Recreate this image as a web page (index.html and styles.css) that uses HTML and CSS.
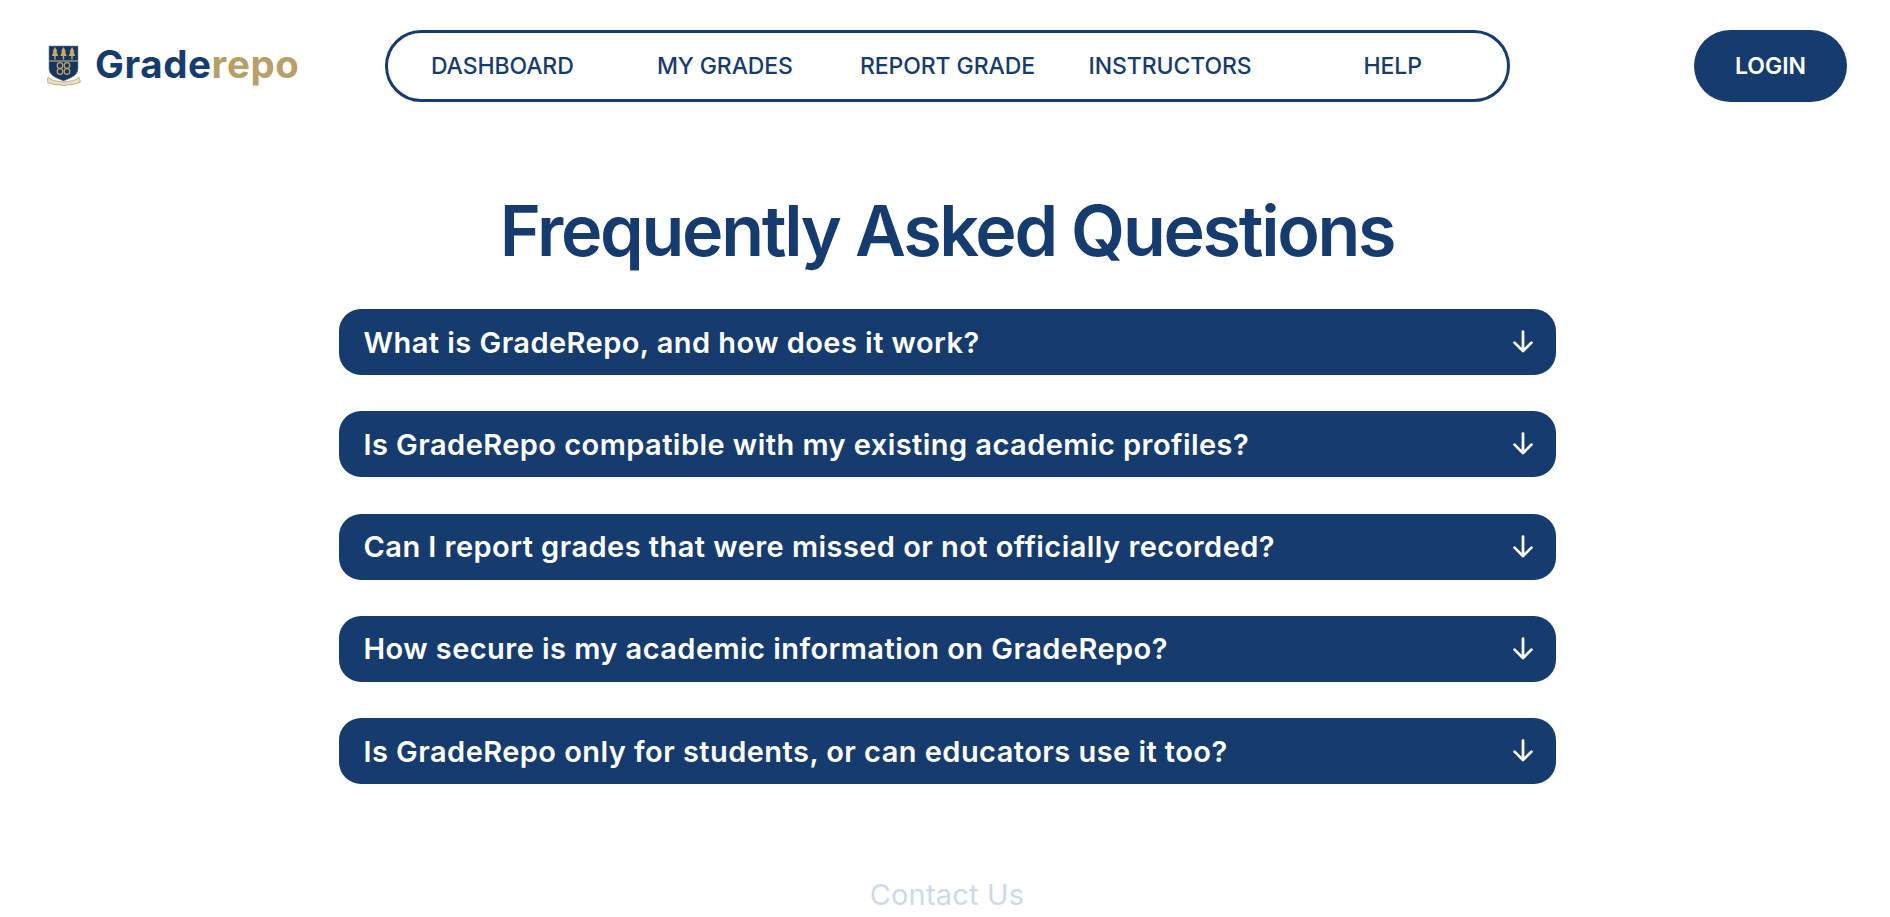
FILE: index.html
```html
<!DOCTYPE html>
<html lang="en">
<head>
  <meta charset="UTF-8">
  <meta name="viewport" content="width=device-width, initial-scale=1.0">
  <title>GradeRepo FAQ</title>
  <link rel="stylesheet" href="styles.css">
</head>
<body>

  <!-- Header with logo and navigation -->
  <header class="header">
    <a href="#" class="logo-container">
      <svg class="logo" viewBox="0 0 34 42" aria-hidden="true">
        <path d="M2 1H31V24C31 30 24 33 16.500 36C9 33 2 30 2 24Z" fill="#17365f" stroke="#6f83a0" stroke-width="0.600"/>
        <rect x="2.300" y="15.500" width="28.400" height="1" fill="#d6c08a"/>
        <g fill="#c9ab69">
          <path d="M8 2L10.500 6.500L9.400 6.500L11.200 11L8.700 11V14.500H7.300V11L4.800 11L6.600 6.500L5.500 6.500Z"/>
          <path d="M16.500 2L19 6.500L17.900 6.500L19.700 11L17.200 11V14.500H15.800V11L13.300 11L15.100 6.500L14 6.500Z"/>
          <path d="M25 2L27.500 6.500L26.400 6.500L28.200 11L25.700 11V14.500H24.300V11L21.800 11L23.600 6.500L22.500 6.500Z"/>
        </g>
        <g fill="none" stroke="#c2a565" stroke-width="1.200">
          <circle cx="13" cy="20.500" r="2.800"/>
          <circle cx="20" cy="20.500" r="2.800"/>
          <circle cx="13" cy="26.500" r="2.800"/>
          <circle cx="20" cy="26.500" r="2.800"/>
        </g>
        <path d="M1 32.500C6 36.500 11 36 16.500 37C22 36 27 36.500 32 32.500L33.500 37C28 40 22 39.500 16.500 40.500C11 39.500 5 40 -0.500 37Z" fill="#e9dcc0" stroke="#b89f68" stroke-width="0.800"/>
      </svg>
      <div class="logo-text">Grade<span class="logo-accent">repo</span></div>
    </a>
    <nav class="nav-links">
      <a href="#" class="nav-link">DASHBOARD</a>
      <a href="#" class="nav-link">MY GRADES</a>
      <a href="#" class="nav-link">REPORT GRADE</a>
      <a href="#" class="nav-link">INSTRUCTORS</a>
      <a href="#" class="nav-link">HELP</a>
    </nav>
    <a href="#" class="login-btn">LOGIN</a>
  </header>

  <!-- Main content -->
  <main class="main-content">
    <h1 class="title">Frequently Asked Questions</h1>
    <div class="faq-list">
      <button class="faq-item">
        <span>What is GradeRepo, and how does it work?</span>
        <svg class="faq-arrow" viewBox="0 0 20 20" aria-hidden="true"><path d="M10 2V17M3.500 10.500L10 17L16.500 10.500"/></svg>
      </button>
      <button class="faq-item">
        <span>Is GradeRepo compatible with my existing academic profiles?</span>
        <svg class="faq-arrow" viewBox="0 0 20 20" aria-hidden="true"><path d="M10 2V17M3.500 10.500L10 17L16.500 10.500"/></svg>
      </button>
      <button class="faq-item">
        <span>Can I report grades that were missed or not officially recorded?</span>
        <svg class="faq-arrow" viewBox="0 0 20 20" aria-hidden="true"><path d="M10 2V17M3.500 10.500L10 17L16.500 10.500"/></svg>
      </button>
      <button class="faq-item">
        <span>How secure is my academic information on GradeRepo?</span>
        <svg class="faq-arrow" viewBox="0 0 20 20" aria-hidden="true"><path d="M10 2V17M3.500 10.500L10 17L16.500 10.500"/></svg>
      </button>
      <button class="faq-item">
        <span>Is GradeRepo only for students, or can educators use it too?</span>
        <svg class="faq-arrow" viewBox="0 0 20 20" aria-hidden="true"><path d="M10 2V17M3.500 10.500L10 17L16.500 10.500"/></svg>
      </button>
    </div>
    <div class="contact-link">Contact Us</div>
  </main>
</body>
</html>
```

FILE: styles.css
```css
/* Colors */
:root {
  --navy: #163c6f;
  --gold: #b89f68;
}

/* Base styles */
* {
  margin: 0;
  padding: 0;
  box-sizing: border-box;
}

body {
  font-family: Inter, 'Noto Sans', sans-serif;
  background-color: #ffffff;
  color: var(--navy);
  overflow: hidden;
  height: 100vh;
}

/* Header */
.header {
  display: flex;
  align-items: center;
  padding: 30px 43px 0 47px;
}

.logo-container {
  display: flex;
  align-items: center;
  gap: 14px;
  width: 338px;
  text-decoration: none;
}

.logo {
  width: 34px;
  height: 42px;
  flex-shrink: 0;
}

.logo-text {
  padding-bottom: 5px;
  font-size: 38.500px;
  font-weight: 700;
  letter-spacing: 0.6px;
  color: var(--navy);
}

.logo-accent {
  color: var(--gold);
}

.nav-links {
  display: grid;
  grid-template-columns: repeat(5, 1fr);
  width: 1125px;
  height: 72px;
  padding: 0 3px;
  align-items: center;
  border: 3px solid var(--navy);
  border-radius: 36px;
}

.nav-link {
  font-size: 23px;
  font-weight: 500;
  letter-spacing: -0.1px;
  text-align: center;
  color: var(--navy);
  text-decoration: none;
}

.login-btn {
  margin-left: auto;
  width: 153px;
  height: 72px;
  display: flex;
  align-items: center;
  justify-content: center;
  background-color: var(--navy);
  border-radius: 36px;
  color: #ffffff;
  font-size: 23px;
  font-weight: 600;
  text-decoration: none;
}

/* Main content */
.main-content {
  display: flex;
  flex-direction: column;
  align-items: center;
  padding-left: 4px;
}

.title {
  margin-top: 92px;
  font-size: 70px;
  font-weight: 600;
  letter-spacing: -2.3px;
  line-height: 73px;
  text-align: center;
}

.faq-list {
  display: flex;
  flex-direction: column;
  gap: 36.250px;
  width: 1217px;
  margin-top: 42px;
}

.faq-item {
  display: flex;
  align-items: center;
  justify-content: space-between;
  height: 66px;
  padding: 0 20px 0 25px;
  background-color: var(--navy);
  border: none;
  border-radius: 22px;
  color: #ffffff;
  font-family: inherit;
  font-size: 29px;
  font-weight: 600;
  letter-spacing: 0.45px;
  text-align: left;
}

.faq-arrow {
  width: 26px;
  height: 26px;
  fill: none;
  stroke: #ffffff;
  stroke-width: 2.100;
  stroke-linecap: round;
  stroke-linejoin: round;
}

.contact-link {
  margin-top: 93px;
  font-size: 29px;
  letter-spacing: 0.2px;
  color: #cdd9e8;
}
```
